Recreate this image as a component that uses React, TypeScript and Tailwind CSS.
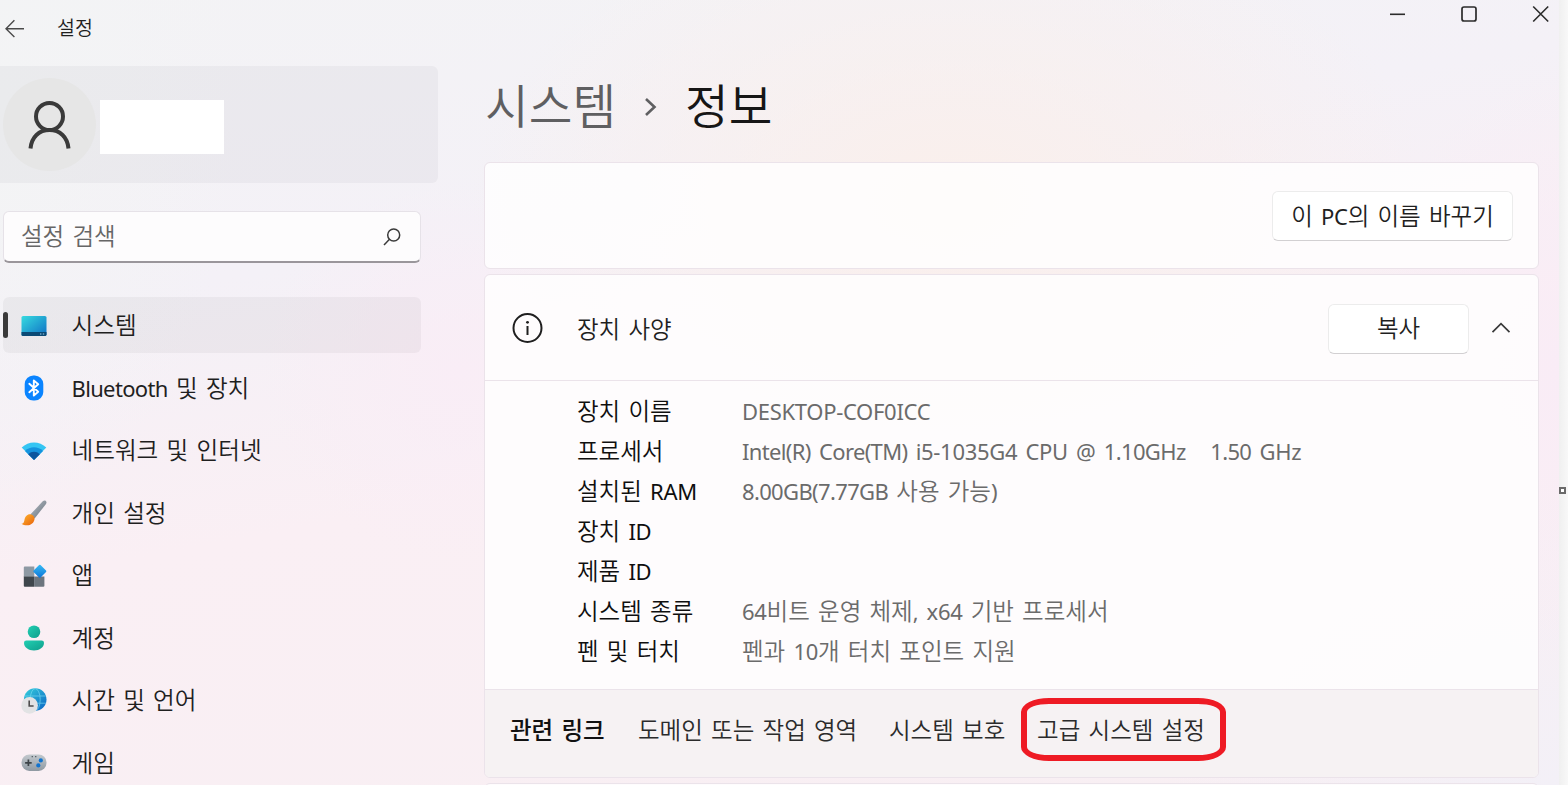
import type { ReactNode } from "react";

type NavItem = {
  label: string;
  icon: ReactNode;
  active?: boolean;
};

type Spec = {
  name: string;
  value?: string;
};

const DisplayIcon = () => (
  <svg width="26" height="26" viewBox="0 0 26 26">
    <defs>
      <linearGradient id="display" x1="0" y1="0" x2="1" y2="1">
        <stop offset="0" stopColor="#36dbe0" />
        <stop offset="1" stopColor="#0f6fc4" />
      </linearGradient>
    </defs>
    <rect x="0.5" y="3" width="25" height="20" rx="1.6" fill="url(#display)" />
    <path d="M0.5 19h25v2.4a1.6 1.6 0 0 1-1.6 1.6H2.1a1.6 1.6 0 0 1-1.6-1.6z" fill="#0b4a75" />
    <path d="M19 21h1.4M21.8 21h1.4" stroke="#9fd4ee" strokeWidth="1.2" />
  </svg>
);

const BluetoothIcon = () => (
  <svg width="26" height="26" viewBox="0 0 26 26">
    <rect x="3.7" y="0.5" width="18.6" height="25" rx="8.6" fill="#0a84ff" />
    <path
      d="M8.3 8.8l8.9 7.9-4.4 3.9V5.4l4.4 3.9-8.9 7.9"
      fill="none"
      stroke="#fff"
      strokeWidth="1.9"
      strokeLinejoin="round"
      strokeLinecap="round"
    />
  </svg>
);

const WifiIcon = () => (
  <svg width="26" height="26" viewBox="0 0 26 26">
    <path d="M0.7 9.6C7.4 2.7 18.6 2.7 25.3 9.6L13 22z" fill="#35c5f3" />
    <path d="M4 12.9c5-5 13-5 18 0L13 22z" fill="#1593de" />
    <path d="M7.2 16.2c3.2-3.3 8.4-3.3 11.6 0L13 22z" fill="#0b559e" />
  </svg>
);

const BrushIcon = () => (
  <svg width="26" height="26" viewBox="0 0 26 26">
    <defs>
      <linearGradient id="handle" x1="0" y1="0" x2="1" y2="1">
        <stop offset="0" stopColor="#b6bec6" />
        <stop offset="1" stopColor="#66707a" />
      </linearGradient>
      <linearGradient id="bristle" x1="0" y1="0" x2="1" y2="1">
        <stop offset="0" stopColor="#ffb52e" />
        <stop offset="1" stopColor="#e8620c" />
      </linearGradient>
    </defs>
    <path d="M24.8 0.9c1 0.9 0.8 2 0.2 3L13.6 18.6l-4.3-4L22 1.1c0.9-0.8 1.9-0.9 2.8-0.2z" fill="url(#handle)" />
    <path
      d="M9.3 14.3c2.5 0.3 4.2 2 4.3 4.4-0.5 4.2-3.6 6.6-7.6 6.6-2.2 0-4-0.4-5.5-1.5 2-0.3 2.5-1.6 2.9-3.6 0.6-3.6 2.6-6 5.9-5.9z"
      fill="url(#bristle)"
    />
  </svg>
);

const AppsIcon = () => (
  <svg width="26" height="26" viewBox="0 0 26 26">
    <defs>
      <linearGradient id="tile" x1="0" y1="0" x2="1" y2="1">
        <stop offset="0" stopColor="#38bdf5" />
        <stop offset="1" stopColor="#0b72d6" />
      </linearGradient>
    </defs>
    <path d="M3.8 3.6h9.5v10.2h-10.5v-9.2a1 1 0 0 1 1-1z" fill="#8e99a3" />
    <path d="M2.8 13.6h10.3v10.2H3.8a1 1 0 0 1-1-1z" fill="#3f464c" />
    <path d="M13.1 13.6h10.3v9.2a1 1 0 0 1-1 1h-9.3z" fill="#6c757e" />
    <rect x="13.9" y="3.4" width="9.8" height="9.8" rx="1" transform="rotate(45 18.8 8.3)" fill="url(#tile)" />
  </svg>
);

const AccountIcon = () => (
  <svg width="26" height="26" viewBox="0 0 26 26">
    <defs>
      <linearGradient id="person" x1="0" y1="0" x2="1" y2="1">
        <stop offset="0" stopColor="#22cfb2" />
        <stop offset="1" stopColor="#109e8c" />
      </linearGradient>
    </defs>
    <circle cx="13" cy="6.8" r="6.3" fill="url(#person)" />
    <path d="M5.4 15.4h15.2a2.4 2.4 0 0 1 2.4 2.4c0 4.6-4.4 7.7-10 7.7s-10-3.1-10-7.7a2.4 2.4 0 0 1 2.4-2.4z" fill="url(#person)" />
  </svg>
);

const TimeIcon = () => (
  <svg width="26" height="26" viewBox="0 0 26 26">
    <defs>
      <linearGradient id="globe" x1="0" y1="0" x2="1" y2="1">
        <stop offset="0" stopColor="#35d0dc" />
        <stop offset="1" stopColor="#0b62c4" />
      </linearGradient>
    </defs>
    <circle cx="14.2" cy="11.6" r="11.3" fill="url(#globe)" />
    <g fill="none" stroke="#7fdcf4" strokeWidth="0.9" opacity="0.7">
      <path d="M3.8 8h20.8M3.2 15.2h22" />
      <ellipse cx="14.2" cy="11.6" rx="5" ry="11" />
    </g>
    <circle cx="8.6" cy="17.4" r="8.3" fill="#e2e3e4" />
    <path d="M8.2 12.4v5.6h4.4" fill="none" stroke="#4d4d4d" strokeWidth="1.6" />
  </svg>
);

const GameIcon = () => (
  <svg width="26" height="26" viewBox="0 0 26 26">
    <defs>
      <linearGradient id="pad" x1="0" y1="0" x2="0" y2="1">
        <stop offset="0" stopColor="#c3c9ce" />
        <stop offset="1" stopColor="#8f99a2" />
      </linearGradient>
    </defs>
    <rect x="0.5" y="4.5" width="25" height="16.4" rx="7.8" fill="url(#pad)" />
    <path d="M7.4 9.5v6.6M4.1 12.8h6.6" stroke="#3d4348" strokeWidth="1.7" />
    <path d="M10.6 6.7h1.4M14 6.7h1.4" stroke="#5b646b" strokeWidth="1.2" />
    <circle cx="19.8" cy="10.4" r="2.1" fill="#1173cf" />
    <circle cx="17.3" cy="15.4" r="2.1" fill="#1173cf" />
  </svg>
);

const navItems: NavItem[] = [
  { label: "시스템", icon: <DisplayIcon />, active: true },
  { label: "Bluetooth 및 장치", icon: <BluetoothIcon /> },
  { label: "네트워크 및 인터넷", icon: <WifiIcon /> },
  { label: "개인 설정", icon: <BrushIcon /> },
  { label: "앱", icon: <AppsIcon /> },
  { label: "계정", icon: <AccountIcon /> },
  { label: "시간 및 언어", icon: <TimeIcon /> },
  { label: "게임", icon: <GameIcon /> },
];

const specs: Spec[] = [
  { name: "장치 이름", value: "DESKTOP-COF0ICC" },
  { name: "프로세서", value: "Intel(R) Core(TM) i5-1035G4 CPU @ 1.10GHz\u00a0\u00a0 1.50 GHz" },
  { name: "설치된 RAM", value: "8.00GB(7.77GB 사용 가능)" },
  { name: "장치 ID" },
  { name: "제품 ID" },
  { name: "시스템 종류", value: "64비트 운영 체제, x64 기반 프로세서" },
  { name: "펜 및 터치", value: "펜과 10개 터치 포인트 지원" },
];

// Latin letters and digits are set a little smaller than the Hangul around them
function Label({ text }: { text: string }) {
  return (
    <>
      {text.split(/([!-~]+)/).map((part, i) =>
        i % 2 ? (
          <span
            key={i}
            className={`text-[22px] font-normal ${/[a-z]{3}|\d\.\d/.test(part) ? "tracking-[-0.65px]" : "tracking-[-0.3px]"}`}
          >
            {part}
          </span>
        ) : (
          part
        ),
      )}
    </>
  );
}

function WindowControls() {
  return (
    <div className="flex h-[28px] shrink-0 items-start justify-end gap-[55px] pr-[10px] pt-[5px] text-[#2b2b2b]">
      <button type="button" aria-label="최소화">
        <svg width="17" height="18" viewBox="0 0 17 18" fill="none" stroke="currentColor" strokeWidth="1.6">
          <path d="M2 9.3h15" />
        </svg>
      </button>
      <button type="button" aria-label="최대화">
        <svg width="17" height="18" viewBox="0 0 17 18" fill="none" stroke="currentColor" strokeWidth="1.7">
          <rect x="2" y="2" width="14" height="14" rx="2" />
        </svg>
      </button>
      <button type="button" aria-label="닫기">
        <svg width="17" height="18" viewBox="0 0 17 18" fill="none" stroke="currentColor" strokeWidth="1.6">
          <path d="M1.2 1.5l15 15M16.2 1.5l-15 15" />
        </svg>
      </button>
    </div>
  );
}

function Sidebar() {
  return (
    <aside className="w-[484px] shrink-0">
      <header className="flex h-[66px] items-start pl-[5px] pt-[17px]">
        <svg width="20" height="22" viewBox="0 0 20 22" fill="none" stroke="#4a4a4a" strokeWidth="1.4">
          <path d="M19 11.7H1.2M9.4 3.2L1 11.7l8.4 8.4" />
        </svg>
        <span className="ml-[32px] text-[19.5px] leading-[22px] text-[#1f1f1f]">설정</span>
      </header>

      <div className="flex h-[117px] w-[438px] items-center rounded-r-md bg-[#00001809] pl-[3px]">
        <div className="flex h-[93px] w-[93px] items-center justify-center rounded-full bg-[#e6e6e6]">
          <svg width="44" height="50" viewBox="0 0 44 50" fill="none" stroke="#3a3a3a" strokeWidth="4">
            <circle cx="21.5" cy="16.5" r="13.5" />
            <path d="M2.5 48.5C3.5 37 11 30 21.5 30S39.5 37 40.5 48.5" />
          </svg>
        </div>
        <div className="ml-[4px] mt-[4px] h-[54px] w-[124px] bg-white" />
      </div>

      <div className="ml-[3px] mt-[28px] flex h-[52px] w-[418px] items-center justify-between rounded-md border border-b-2 border-[#e6e2e8] border-b-[#9a969b] bg-[#fdfcfd] pl-[17px] pr-[19px]">
        <span className="-mt-[2px] text-[23.5px] leading-[30px] text-[#666]">설정 검색</span>
        <svg width="18" height="18" viewBox="0 0 18 18" fill="none" stroke="#3a3a3a" strokeWidth="1.5">
          <circle cx="10.7" cy="7" r="6" />
          <path d="M6.5 11.3L1 17" />
        </svg>
      </div>

      <nav className="mt-[34px] flex flex-col gap-[6.5px] pl-[3px]">
        {navItems.map((item) => (
          <div
            key={item.label}
            className={`flex h-[56px] w-[418px] shrink-0 items-center rounded-md ${item.active ? "bg-[#0000000a]" : ""}`}
          >
            <span className={`h-[26px] w-[5px] rounded-full ${item.active ? "bg-[#3a3a3a]" : ""}`} />
            <span className="ml-[12.5px] mt-px">{item.icon}</span>
            <span className="ml-[25px] text-[23.6px] leading-[30px] text-[#1f1f1f]">
              <Label text={item.label} />
            </span>
          </div>
        ))}
      </nav>
    </aside>
  );
}

function DeviceSpecs() {
  return (
    <section className="mt-[5px] flex h-[504px] shrink-0 flex-col overflow-hidden rounded-md border border-[#ebe3ea] bg-[#ffffffcc]">
      <div className="flex h-[106px] items-center border-b border-[#ebe3ea] pl-[27px] pr-[27px]">
        <svg className="-ml-px" width="32" height="32" viewBox="0 0 32 32" fill="none" stroke="#1f1f1f">
          <circle cx="16.5" cy="16" r="14" strokeWidth="2" />
          <path d="M16.5 14v9" strokeWidth="2" />
          <circle cx="16.5" cy="10.3" r="1.4" fill="#1f1f1f" stroke="none" />
        </svg>
        <span className="ml-[34px] mt-[2px] text-[23.5px] leading-[30px] text-[#1f1f1f]">장치 사양</span>
        <button
          type="button"
          className="ml-auto mt-[2px] h-[50px] w-[141px] rounded-md border border-[#ececec] border-b-[#d2d0d2] bg-white pb-[2px] text-[23.5px] leading-[30px] text-[#1f1f1f]"
        >
          복사
        </button>
        <svg className="ml-[22px]" width="20" height="12" viewBox="0 0 20 12" fill="none" stroke="#3a3a3a" strokeWidth="1.7">
          <path d="M1.500 10.200L10 1.700l8.500 8.500" />
        </svg>
      </div>

      <dl className="h-[308px] pl-[92px] pt-[10px] text-[23.5px] leading-[40px]">
        {specs.map((spec) => (
          <div key={spec.name} className="flex h-[40px] whitespace-nowrap">
            <dt className="w-[165px] text-[#0f0f0f]">
              <Label text={spec.name} />
            </dt>
            <dd className="text-[#6b6b6b]">{spec.value && <Label text={spec.value} />}</dd>
          </div>
        ))}
      </dl>

      <div className="flex flex-1 items-center border-t border-[#ebe3ea] bg-[#f2efefb8] pb-[8px] pl-[25px] text-[23.5px] leading-[30px] text-[#2b2b2b]">
        <span className="w-[128px] font-medium text-[#111]">관련 링크</span>
        <span className="w-[251px]">도메인 또는 작업 영역</span>
        <span className="w-[131.5px]">시스템 보호</span>
        <span className="flex h-[63px] w-[205px] items-center justify-center rounded-[28px/14px] border-[6px] border-[#ee1b24] pr-[4px]">
          고급 시스템 설정
        </span>
      </div>
    </section>
  );
}

export default function App() {
  return (
    <div className="flex h-[785px] w-[1568px] overflow-hidden whitespace-nowrap bg-[#f7f7f7] font-['Noto_Sans','Noto_Sans_CJK_KR',sans-serif] font-[350] [word-spacing:2.1px]">
      <div className="flex h-full w-[1559px] bg-[radial-gradient(ellipse_480px_300px_at_950px_200px,#faefeb,#faefeb00),radial-gradient(ellipse_200px_300px_at_1559px_370px,#f9ecf6,#f9ecf600),radial-gradient(ellipse_400px_300px_at_1559px_785px,#f3f0f7,#f3f0f700),radial-gradient(ellipse_200px_190px_at_460px_370px,#f9edf6,#f9edf600),radial-gradient(ellipse_240px_420px_at_0px_100px,#f3f4f5,#f3f4f500),linear-gradient(170deg,#f3f3f5_0%,#f4f1f7_30%,#faeff4_55%,#f8eff3_100%)]">
        <Sidebar />

        <div className="flex w-[1075px] flex-col">
          <WindowControls />

          <main className="flex w-[1055px] flex-col">
            <div className="flex h-[134px] shrink-0 items-start pl-px pt-[45px] text-[47.5px] leading-[66px]">
              <span className="text-[#5f5f61]">시스템</span>
              <svg className="ml-[28px] mt-[24px]" width="14" height="20" viewBox="0 0 14 20" fill="none" stroke="#5f5f61" strokeWidth="2.6">
                <path d="M2 2l8.5 8L2 18" />
              </svg>
              <span className="ml-[27px] text-[#161616]">정보</span>
            </div>

            <section className="flex h-[107px] shrink-0 items-center justify-end rounded-md border border-[#ebe3ea] bg-[#ffffffcc] pr-[25px]">
              <button
                type="button"
                className="h-[50px] w-[241px] rounded-md border border-[#ececec] border-b-[#d2d0d2] bg-white text-[23.5px] leading-[30px] text-[#1f1f1f] [word-spacing:2.1px]"
              >
                <Label text="이 PC의 이름 바꾸기" />
              </button>
            </section>

            <DeviceSpecs />

            <section className="mt-[5px] h-[60px] shrink-0 rounded-md border border-[#ebe3ea] bg-[#ffffffcc]" />
          </main>
        </div>
      </div>

      {/* window edge with its resize handle */}
      <div className="flex flex-1 items-start bg-linear-to-r from-[#f0f0f0] to-[#f8f8f8] pt-[487px]">
        <span className="h-[7px] w-[7px] border-2 border-[#6a6a6a] bg-white" />
      </div>
    </div>
  );
}
